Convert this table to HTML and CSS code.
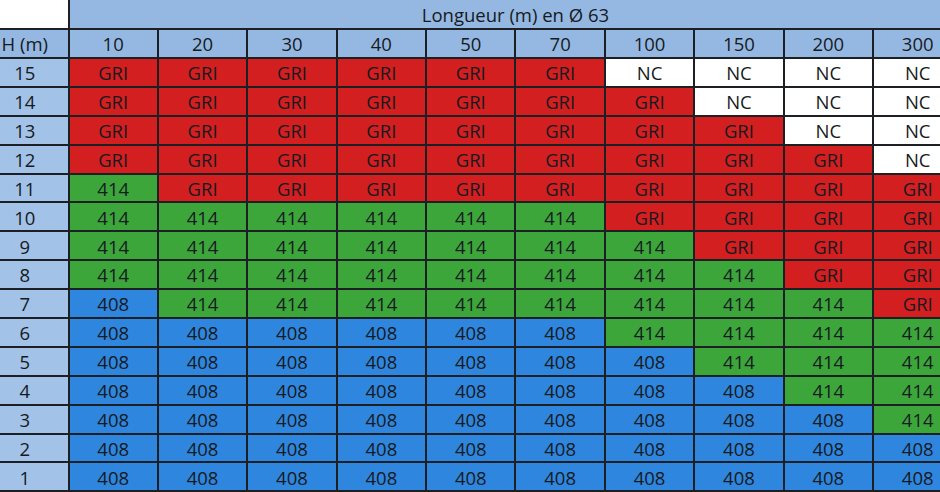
FILE: index.html
```html
<!DOCTYPE html>
<html lang="fr">
<head>
<meta charset="utf-8">
<title>Longueur (m) en Ø 63</title>
<link rel="stylesheet" href="styles.css">
</head>
<body>
<div class="sheet">
  <div class="corner"></div>
  <div class="title">Longueur (m) en Ø 63</div>

  <div class="rh hd">H (m)</div>
  <div class="ch">10</div><div class="ch">20</div><div class="ch">30</div><div class="ch">40</div><div class="ch">50</div><div class="ch">70</div><div class="ch">100</div><div class="ch">150</div><div class="ch">200</div><div class="ch">300</div>

  <div class="rh">15</div>
  <div class="r">GRI</div><div class="r">GRI</div><div class="r">GRI</div><div class="r">GRI</div><div class="r">GRI</div><div class="r">GRI</div><div class="w">NC</div><div class="w">NC</div><div class="w">NC</div><div class="w">NC</div>

  <div class="rh">14</div>
  <div class="r">GRI</div><div class="r">GRI</div><div class="r">GRI</div><div class="r">GRI</div><div class="r">GRI</div><div class="r">GRI</div><div class="r">GRI</div><div class="w">NC</div><div class="w">NC</div><div class="w">NC</div>

  <div class="rh">13</div>
  <div class="r">GRI</div><div class="r">GRI</div><div class="r">GRI</div><div class="r">GRI</div><div class="r">GRI</div><div class="r">GRI</div><div class="r">GRI</div><div class="r">GRI</div><div class="w">NC</div><div class="w">NC</div>

  <div class="rh">12</div>
  <div class="r">GRI</div><div class="r">GRI</div><div class="r">GRI</div><div class="r">GRI</div><div class="r">GRI</div><div class="r">GRI</div><div class="r">GRI</div><div class="r">GRI</div><div class="r">GRI</div><div class="w">NC</div>

  <div class="rh">11</div>
  <div class="g">414</div><div class="r">GRI</div><div class="r">GRI</div><div class="r">GRI</div><div class="r">GRI</div><div class="r">GRI</div><div class="r">GRI</div><div class="r">GRI</div><div class="r">GRI</div><div class="r">GRI</div>

  <div class="rh">10</div>
  <div class="g">414</div><div class="g">414</div><div class="g">414</div><div class="g">414</div><div class="g">414</div><div class="g">414</div><div class="r">GRI</div><div class="r">GRI</div><div class="r">GRI</div><div class="r">GRI</div>

  <div class="rh">9</div>
  <div class="g">414</div><div class="g">414</div><div class="g">414</div><div class="g">414</div><div class="g">414</div><div class="g">414</div><div class="g">414</div><div class="r">GRI</div><div class="r">GRI</div><div class="r">GRI</div>

  <div class="rh">8</div>
  <div class="g">414</div><div class="g">414</div><div class="g">414</div><div class="g">414</div><div class="g">414</div><div class="g">414</div><div class="g">414</div><div class="g">414</div><div class="r">GRI</div><div class="r">GRI</div>

  <div class="rh">7</div>
  <div class="b">408</div><div class="g">414</div><div class="g">414</div><div class="g">414</div><div class="g">414</div><div class="g">414</div><div class="g">414</div><div class="g">414</div><div class="g">414</div><div class="r">GRI</div>

  <div class="rh">6</div>
  <div class="b">408</div><div class="b">408</div><div class="b">408</div><div class="b">408</div><div class="b">408</div><div class="b">408</div><div class="g">414</div><div class="g">414</div><div class="g">414</div><div class="g">414</div>

  <div class="rh">5</div>
  <div class="b">408</div><div class="b">408</div><div class="b">408</div><div class="b">408</div><div class="b">408</div><div class="b">408</div><div class="b">408</div><div class="g">414</div><div class="g">414</div><div class="g">414</div>

  <div class="rh">4</div>
  <div class="b">408</div><div class="b">408</div><div class="b">408</div><div class="b">408</div><div class="b">408</div><div class="b">408</div><div class="b">408</div><div class="b">408</div><div class="g">414</div><div class="g">414</div>

  <div class="rh">3</div>
  <div class="b">408</div><div class="b">408</div><div class="b">408</div><div class="b">408</div><div class="b">408</div><div class="b">408</div><div class="b">408</div><div class="b">408</div><div class="b">408</div><div class="g">414</div>

  <div class="rh">2</div>
  <div class="b">408</div><div class="b">408</div><div class="b">408</div><div class="b">408</div><div class="b">408</div><div class="b">408</div><div class="b">408</div><div class="b">408</div><div class="b">408</div><div class="b">408</div>

  <div class="rh">1</div>
  <div class="b">408</div><div class="b">408</div><div class="b">408</div><div class="b">408</div><div class="b">408</div><div class="b">408</div><div class="b">408</div><div class="b">408</div><div class="b">408</div><div class="b">408</div>
</div>
</body>
</html>
```

FILE: styles.css
```css
html, body {
  margin: 0;
  padding: 0;
  background: #ffffff;
  overflow: hidden;
}

.sheet {
  display: grid;
  grid-template-columns: 67.5px repeat(10, 87.4px);
  grid-template-rows: 28px 27px repeat(15, 26.9px);
  gap: 2px;
  background: #1c1f24;
  width: max-content;
  padding-bottom: 2px;
  font-family: "Open Sans", "Noto Sans", sans-serif;
  font-size: 18.5px;
  color: #161a21;
}

.sheet > div {
  display: flex;
  align-items: center;
  justify-content: center;
  line-height: 1;
  padding-top: 2px;
}

.corner {
  background: #ffffff;
}

.title {
  grid-column: 2 / span 10;
  background: #95b8e3;
}

.ch {
  background: #95b8e3;
}

.rh {
  background: #a3c2e8;
  padding-right: 18px;
}

.rh.hd {
  background: #95b8e3;
}

.r {
  background: #d31f1f;
}

.g {
  background: #3ca63b;
}

.b {
  background: #2e86df;
}

.w {
  background: #ffffff;
}
```
